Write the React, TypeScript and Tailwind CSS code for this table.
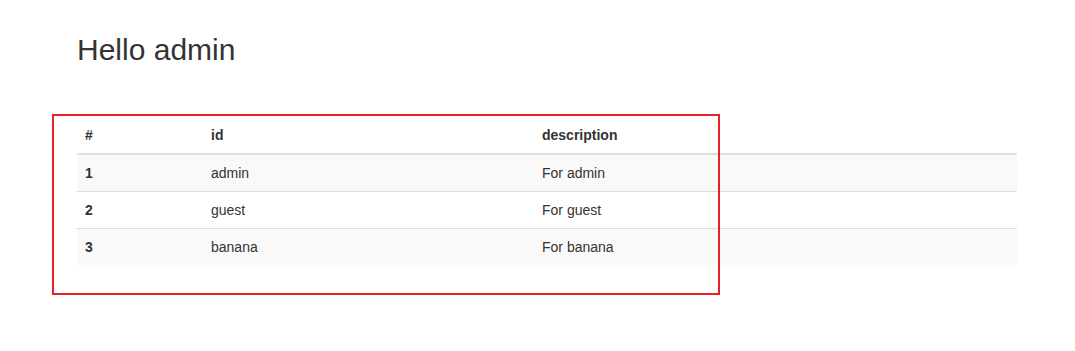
import React from "react";

interface Role {
    id: string;
    description: string;
}

const roles: Role[] = [
    { id: "admin", description: "For admin" },
    { id: "guest", description: "For guest" },
    { id: "banana", description: "For banana" },
];

const App: React.FC = () => {
    return (
        <div
            className="relative h-[351px] w-[1075px] bg-white text-[14px] leading-[20px] text-[#333]"
            style={{ fontFamily: '"Liberation Sans", Arial, sans-serif' }}
        >
            <div className="ml-[77px] w-[940px] pt-[33px]">
                <h2 className="text-[30px] leading-[33px] font-normal">Hello admin</h2>

                <table className="mt-[51px] w-full border-collapse">
                    <thead>
                        <tr className="border-b-2 border-[#ddd]">
                            <th className="w-[126px] p-2 text-left font-bold">#</th>
                            <th className="w-[331px] p-2 text-left font-bold">id</th>
                            <th className="p-2 text-left font-bold">description</th>
                        </tr>
                    </thead>
                    <tbody>
                        {roles.map((role, index) => (
                            <tr
                                key={role.id}
                                className={`${index > 0 ? "border-t border-[#ddd]" : ""} ${index % 2 === 0 ? "bg-[#f9f9f9]" : "bg-white"}`}
                            >
                                <td className="p-2 font-bold">{index + 1}</td>
                                <td className="p-2">{role.id}</td>
                                <td className="p-2">{role.description}</td>
                            </tr>
                        ))}
                    </tbody>
                </table>
            </div>

            {/* highlight frame drawn over the table */}
            <div className="pointer-events-none absolute left-[52px] top-[114px] h-[181px] w-[668px] border-2 border-[#e8202a]" />
        </div>
    );
};

export default App;
